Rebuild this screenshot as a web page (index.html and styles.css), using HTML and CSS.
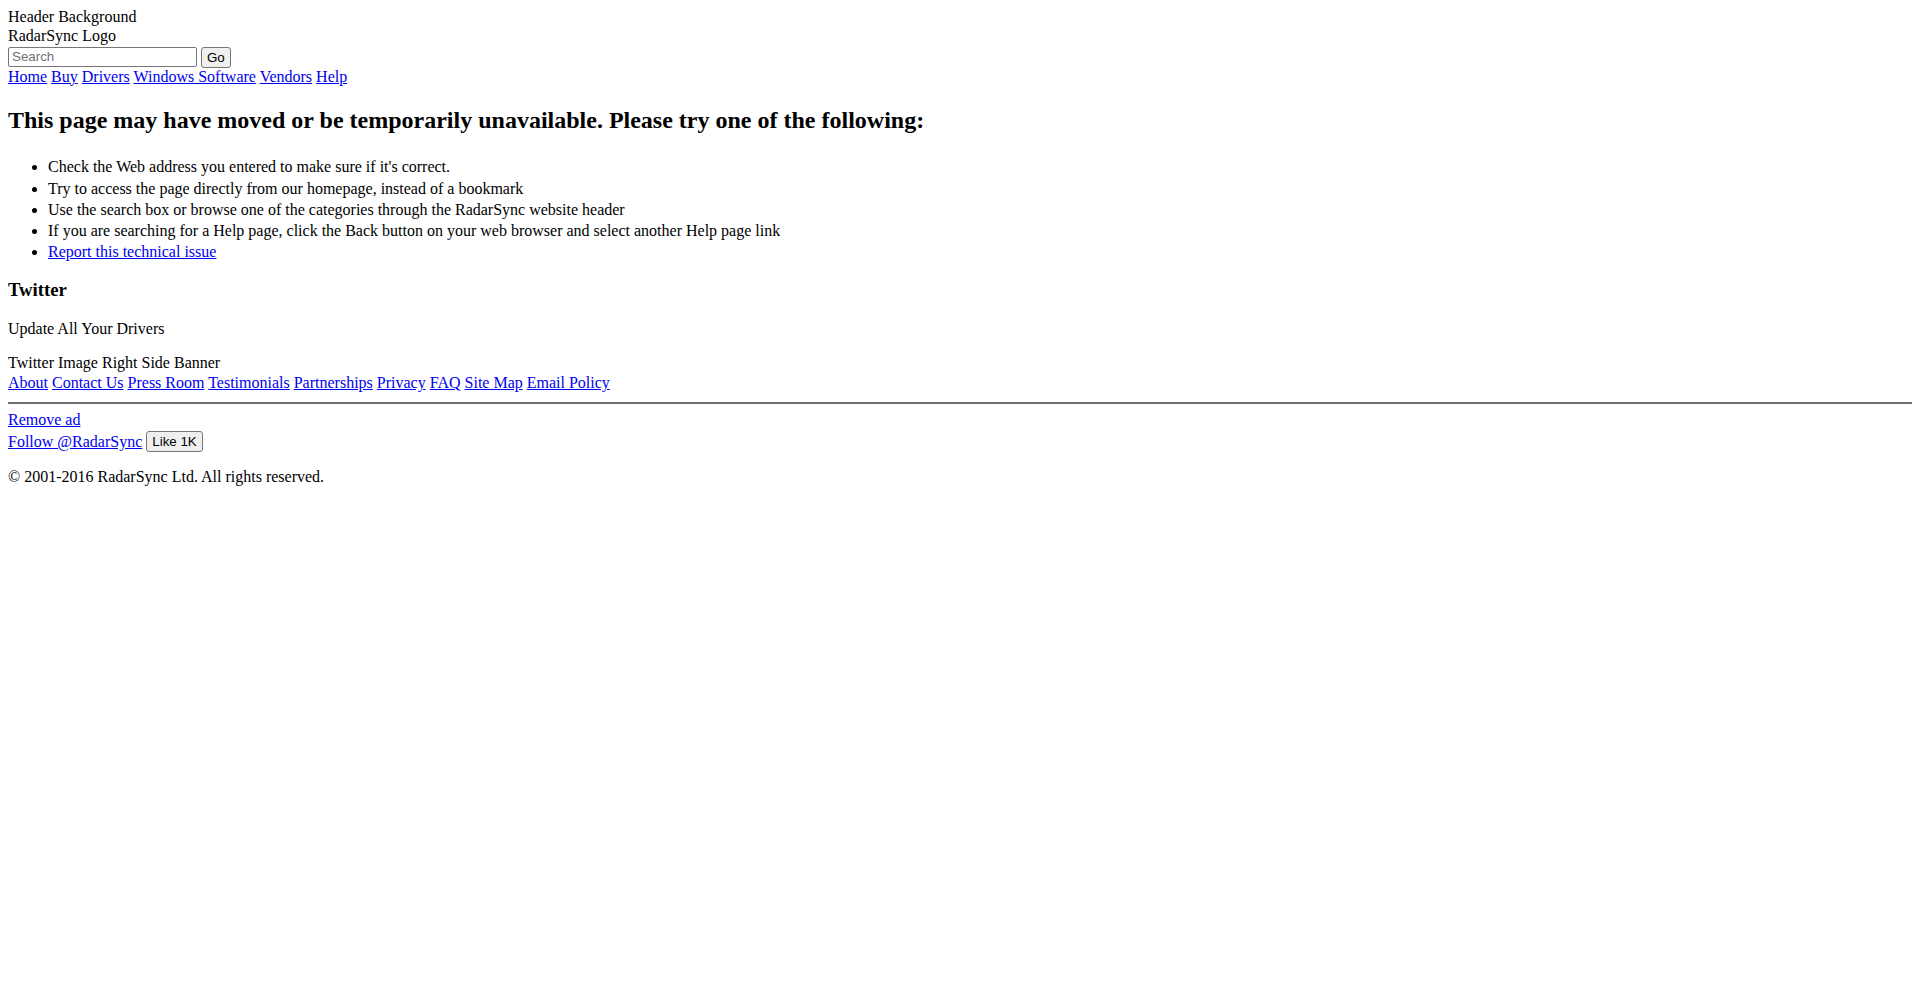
FILE: index.html
```html
<!DOCTYPE html>
<html lang="en">
<head>
<meta charset="utf-8">
<title>Page Not Found - RadarSync</title>
<link rel="stylesheet" href="styles.css">
</head>
<body>
<div class="header">
  <div class="header-bg">Header Background</div>
  <div class="logo">RadarSync Logo</div>
  <form class="search"><input class="search-input" type="text" placeholder="Search"><button class="btn" type="button">Go</button></form>
  <nav class="nav"><a href="#">Home</a> <a href="#">Buy</a> <a href="#">Drivers</a> <a href="#">Windows Software</a> <a href="#">Vendors</a> <a href="#">Help</a></nav>
</div>
<h2 class="title">This page may have moved or be temporarily unavailable. Please try one of the following:</h2>
<ul class="tips">
  <li>Check the Web address you entered to make sure if it's correct.</li>
  <li>Try to access the page directly from our homepage, instead of a bookmark</li>
  <li>Use the search box or browse one of the categories through the RadarSync website header</li>
  <li>If you are searching for a Help page, click the Back button on your web browser and select another Help page link</li>
  <li><a href="#">Report this technical issue</a></li>
</ul>
<h3 class="side-title">Twitter</h3>
<p class="promo">Update All Your Drivers</p>
<div class="banner">Twitter Image Right Side Banner</div>
<nav class="footer-nav"><a href="#">About</a> <a href="#">Contact Us</a> <a href="#">Press Room</a> <a href="#">Testimonials</a> <a href="#">Partnerships</a> <a href="#">Privacy</a> <a href="#">FAQ</a> <a href="#">Site Map</a> <a href="#">Email Policy</a></nav>
<hr class="rule">
<div class="remove-ad"><a href="#">Remove ad</a></div>
<div class="social"><a class="follow" href="#">Follow @RadarSync</a><button class="btn" type="button">Like 1K</button></div>
<p class="copyright">© 2001-2016 RadarSync Ltd. All rights reserved.</p>
</body>
</html>
```

FILE: styles.css
```css
body {
  margin: 8px;
  font-family: "Liberation Serif", "Times New Roman", serif;
  font-size: 16px;
  color: #000;
  background: #fff;
}
a {
  color: #0000ee;
  text-decoration: underline;
}
.header-bg {
  line-height: 18px;
}
.logo {
  line-height: 19.6px;
}
.search {
  box-sizing: border-box;
  margin: 0;
  height: 22px;
  display: flex;
  align-items: flex-start;
  gap: 4px;
  padding-top: 1px;
}
.search-input {
  box-sizing: border-box;
  width: 189px;
  height: 20px;
  margin: 0;
  padding: 1px 3px;
  border: 1px solid #767676;
  border-radius: 2px;
  font-family: "Liberation Sans", Arial, sans-serif;
  font-size: 13.33px;
  color: #000;
}
.search-input::placeholder {
  color: #6f6f6f;
}
.btn {
  box-sizing: border-box;
  height: 21px;
  margin: 0;
  padding: 0 5px;
  border: 1px solid #767676;
  border-radius: 3px;
  background: #efefef;
  font-family: "Liberation Sans", Arial, sans-serif;
  font-size: 13.33px;
  color: #000;
}
.nav {
  line-height: 17.8px;
}
.title {
  font-size: 24px;
  font-weight: bold;
  margin: 21.3px 0 19.9px;
}
.tips {
  margin: 19.9px 0 0;
  padding: 2.8px 0 0 40px;
}
.tips li {
  line-height: 21.2px;
}
.side-title {
  font-size: 18.72px;
  font-weight: bold;
  margin: 17px 0 18.72px;
}
.promo {
  margin: 18.72px 0 16px;
}
.banner {
  line-height: 17px;
}
.footer-nav {
  line-height: 23.4px;
}
.rule {
  margin: 7.4px 0 6.8px;
  border: 0;
  border-top: 2px solid #6e6e6e;
  height: 0;
}
.social {
  display: flex;
  align-items: center;
  gap: 4px;
  height: 21px;
  margin-top: 2.6px;
}
.follow {
  line-height: 16px;
}
.copyright {
  margin: 17px 0 16px;
  line-height: 16px;
}
```
